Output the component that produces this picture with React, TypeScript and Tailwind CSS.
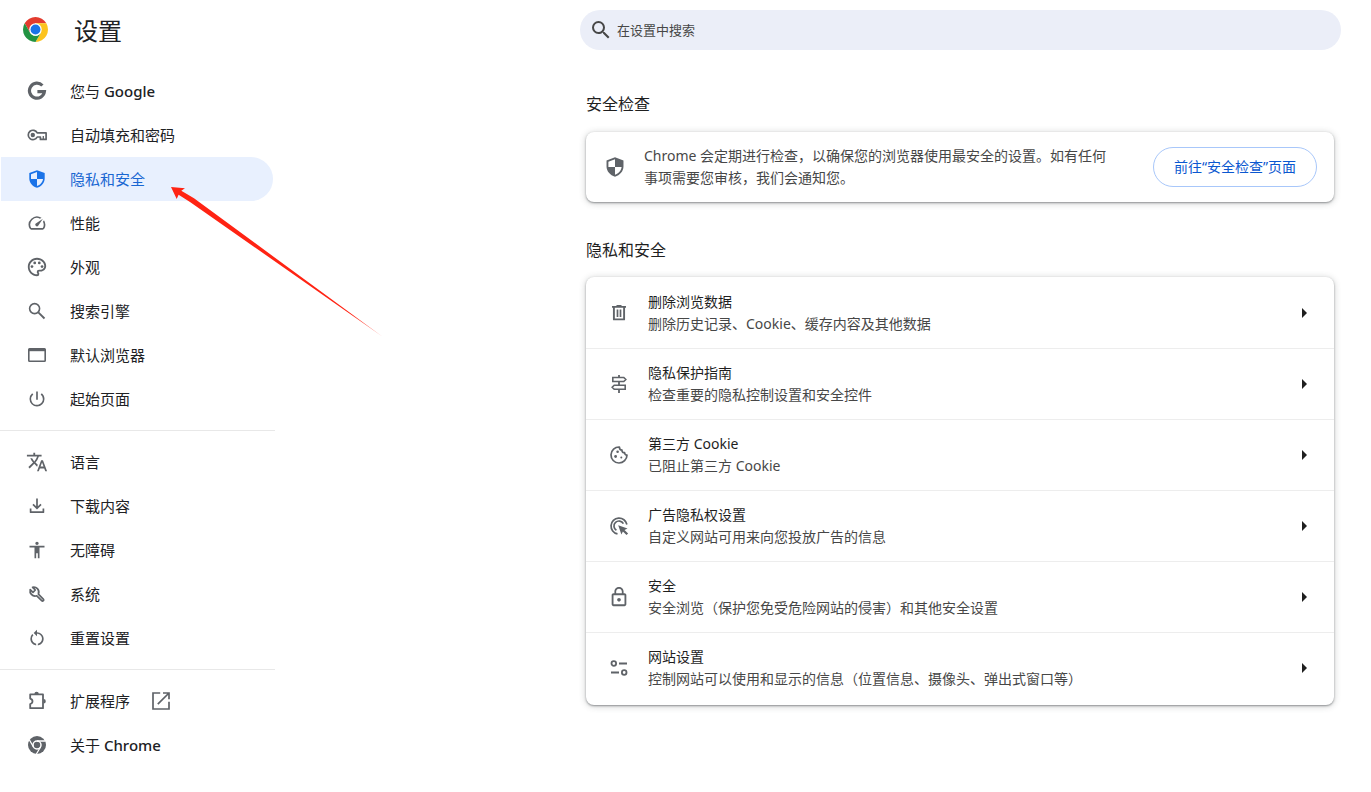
import type { ReactNode } from "react";
import {
  MdAccessibility,
  MdLockOutline,
  MdOutlinePalette,
  MdPowerSettingsNew,
  MdRestartAlt,
  MdSearch,
  MdSpeed,
  MdTranslate,
} from "react-icons/md";
import { clsx } from "clsx";

function Icon({ size = 20, children }: { size?: number; children: ReactNode }) {
  return (
    <svg width={size} height={size} viewBox="0 0 20 20" fill="none" stroke="currentColor" strokeWidth={1.6} aria-hidden>
      {children}
    </svg>
  );
}

function ChromeLogo() {
  return (
    <svg width={25} height={25} viewBox="0 0 48 48" aria-hidden>
      <path d="M24 12h20.78A24 24 0 0 0 3.22 12l10.39 18L24 12Z" fill="#e33b2e" />
      <path d="M34.39 30 24 48A24 24 0 0 0 44.78 12H24l10.39 18Z" fill="#fcc31e" />
      <path d="M13.61 30 3.22 12A24 24 0 0 0 24 48l10.39-18a12 12 0 0 1-20.78 0Z" fill="#229342" />
      <circle cx="24" cy="24" r="12" fill="#fff" />
      <circle cx="24" cy="24" r="9.5" fill="#1a73e8" />
    </svg>
  );
}

function GoogleIcon() {
  return (
    <Icon>
      <path d="M15.4 4.5A7.5 7.5 0 1 0 17.4 10.6H10.4" strokeWidth={3.2} />
    </Icon>
  );
}

function KeyIcon() {
  return (
    <Icon>
      <path d="M10.2 7.9A4.7 4.7 0 1 0 10.2 12H13.4v2.4h5.7V7.9Z" strokeWidth={1.7} strokeLinejoin="round" />
      <path d="M16.3 14.500V11" strokeWidth={1.3} />
      <circle cx="5.8" cy="10" r="2.200" fill="currentColor" stroke="none" />
    </Icon>
  );
}

function ShieldIcon({ size }: { size?: number }) {
  return (
    <Icon size={size}>
      <path
        fill="currentColor"
        stroke="none"
        fillRule="evenodd"
        d="M10 1.2 2.3 4v5.5c0 4.2 3.3 8 7.7 9.3 4.4-1.3 7.7-5.1 7.7-9.3V4L10 1.2ZM10 3v7H4V5.2L10 3Zm0 7h6c-.3 3.2-2.8 6-6 7V10Z"
      />
    </Icon>
  );
}

function NavSearchIcon() {
  return (
    <Icon>
      <circle cx="7.6" cy="7.6" r="5" />
      <path d="m11.3 11.3 6.2 6.2" strokeWidth={1.9} />
    </Icon>
  );
}

function BrowserIcon() {
  return (
    <Icon>
      <rect x="1.8" y="3.8" width="16.4" height="12.4" rx="0.8" />
      <path d="M1.800 4.900h16.400" strokeWidth={2.600} />
    </Icon>
  );
}

function DownloadIcon() {
  return (
    <Icon>
      <path d="M10 2.500v9.500M6 8.400l4 4 4-4" strokeWidth={1.700} />
      <path d="M3.600 12.500v3.700h12.800v-3.700" strokeWidth={1.700} strokeLinejoin="round" />
    </Icon>
  );
}

function WrenchIcon() {
  return (
    <Icon>
      <path
        d="m9.800 11.800 4.900 4.900c.5.5 1.100.5 1.600 0s.5-1.100 0-1.600l-4.900-4.900c.8-1.900.4-4-1-5.500C9 3.300 7.200 2.900 5.600 3.300l2.700 2.700-2.300 2.300-2.800-2.700c-.4 1.700 0 3.500 1.200 4.800 1.400 1.500 3.600 2 5.400 1.400Z"
        strokeWidth={1.700}
        strokeLinejoin="round"
      />
    </Icon>
  );
}

function ExtensionIcon() {
  return (
    <Icon>
      <path
        d="M3.200 3.400h12.800v13.800H3.200V13c1.600-.4 2.300-1.400 2.300-2.700S4.800 8 3.200 7.600Z"
        strokeWidth={1.8}
        strokeLinejoin="round"
      />
      <path d="M7.400 3a2.200 2.200 0 0 1 4.400 0ZM16.600 8a2.200 2.200 0 0 1 0 4.400Z" fill="currentColor" stroke="none" />
    </Icon>
  );
}

function ChromeIcon() {
  return (
    <Icon>
      <circle cx="10" cy="10" r="9" fill="currentColor" stroke="none" />
      <circle cx="10" cy="10" r="4" stroke="#fff" strokeWidth={1.5} />
      <path d="M10 6h8.5M6.500 12 2.300 4.700M13.500 12l-4.200 7.300" stroke="#fff" strokeWidth={1.3} />
    </Icon>
  );
}

function LaunchIcon() {
  return (
    <Icon>
      <path d="M9.200 2H2v16h16v-7.200M12 2h6v6.200M18 2 6.800 13.200" strokeWidth={1.7} />
    </Icon>
  );
}

function TrashIcon() {
  return (
    <Icon>
      <path d="M3 3.900h14M7.500 2.800h5" strokeWidth={1.700} />
      <path d="M4.900 4v12.400h10.200V4" strokeWidth={1.900} strokeLinejoin="round" />
      <path d="M8.500 6.500v7.500M11.500 6.500v7.500" strokeWidth={1.700} />
    </Icon>
  );
}

function SignpostIcon() {
  return (
    <Icon>
      <path d="M10 1v2.500M10 7.500v4M10 15v4" strokeWidth={1.8} />
      <path d="M3.800 3.500h11l2 2-2 2h-11ZM16.200 11.200h-11l-2 2 2 2h11Z" />
    </Icon>
  );
}

function CookieIcon() {
  return (
    <Icon>
      <path
        d="M10.400 2a8 8 0 1 0 7.600 8c-1.400 0-2.300-.8-2.400-2.300-1.700.1-2.800-1-2.600-2.600-1.700 0-2.600-1.300-2.600-3.100Z"
        strokeWidth={1.700}
        strokeLinejoin="round"
      />
      <g fill="currentColor" stroke="none">
        <circle cx="8.600" cy="6.800" r="1.300" />
        <circle cx="6.600" cy="11.500" r="1.400" />
        <circle cx="12.300" cy="12.600" r="1" />
      </g>
    </Icon>
  );
}

function AdsClickIcon() {
  return (
    <Icon>
      <path d="M8.500 17.900A8 8 0 1 1 17.900 8.500" strokeWidth={1.7} />
      <path d="M7.400 14.300a5 5 0 1 1 7-6.600" strokeWidth={1.7} />
      <path d="m9.200 9.200 9.300 3.200-3 1.500 3.600 3.600-1.600 1.600-3.600-3.600-1.500 3Z" fill="currentColor" stroke="none" />
    </Icon>
  );
}

function SiteSettingsIcon() {
  return (
    <Icon>
      <circle cx="4.800" cy="5.500" r="2.300" strokeWidth={1.8} />
      <circle cx="15.200" cy="14.500" r="2.300" strokeWidth={1.8} />
      <path d="M10 5.500h8M2 14.500h8" strokeWidth={1.9} />
    </Icon>
  );
}

type NavItem = {
  label: ReactNode;
  icon: ReactNode;
  active?: boolean;
  external?: boolean;
};

const navGroups: NavItem[][] = [
  [
    { label: <>您与 <span className="font-medium">Google</span></>, icon: <GoogleIcon /> },
    { label: "自动填充和密码", icon: <KeyIcon /> },
    { label: "隐私和安全", icon: <ShieldIcon />, active: true },
    { label: "性能", icon: <MdSpeed size={20} /> },
    { label: "外观", icon: <MdOutlinePalette size={22} /> },
    { label: "搜索引擎", icon: <NavSearchIcon /> },
    { label: "默认浏览器", icon: <BrowserIcon /> },
    { label: "起始页面", icon: <MdPowerSettingsNew size={20} /> },
  ],
  [
    { label: "语言", icon: <MdTranslate size={22} /> },
    { label: "下载内容", icon: <DownloadIcon /> },
    { label: "无障碍", icon: <MdAccessibility size={20} /> },
    { label: "系统", icon: <WrenchIcon /> },
    { label: "重置设置", icon: <MdRestartAlt size={20} /> },
  ],
  [
    { label: "扩展程序", icon: <ExtensionIcon />, external: true },
    { label: <>关于 <span className="font-medium">Chrome</span></>, icon: <ChromeIcon /> },
  ],
];

const privacyRows = [
  { title: "删除浏览数据", detail: "删除历史记录、Cookie、缓存内容及其他数据", icon: <TrashIcon /> },
  { title: "隐私保护指南", detail: "检查重要的隐私控制设置和安全控件", icon: <SignpostIcon /> },
  { title: "第三方 Cookie", detail: "已阻止第三方 Cookie", icon: <CookieIcon /> },
  { title: "广告隐私权设置", detail: "自定义网站可用来向您投放广告的信息", icon: <AdsClickIcon /> },
  { title: "安全", detail: "安全浏览（保护您免受危险网站的侵害）和其他安全设置", icon: <MdLockOutline size={22} /> },
  { title: "网站设置", detail: "控制网站可以使用和显示的信息（位置信息、摄像头、弹出式窗口等）", icon: <SiteSettingsIcon /> },
];

const cardClass =
  "mr-[7px] ml-[6px] rounded-lg bg-white shadow-[0_1px_2px_rgba(60,64,67,0.5),0_1px_6px_1px_rgba(60,64,67,0.2)]";

function Sidebar() {
  return (
    <aside className="w-[275px] shrink-0">
      <header className="flex h-[69px] items-start gap-[26px] pt-[13px] pl-[23px]">
        <div className="pt-1">
          <ChromeLogo />
        </div>
        <h1 className="text-2xl leading-9 text-[#202124]">设置</h1>
      </header>
      <nav aria-label="设置">
        {navGroups.map((group, i) => (
          <ul key={i} className={clsx(i > 0 && "mt-[9px] border-t border-[#e8e8e8] pt-[9px]")}>
            {group.map((item, j) => (
              <li key={j}>
                <a
                  href="#"
                  aria-current={item.active ? "page" : undefined}
                  className={clsx(
                    "mr-[2px] ml-px flex h-11 items-center rounded-r-full pl-[25px] text-[15px]",
                    item.active ? "bg-[#e8f0fe] text-[#1967d2]" : "text-[#202124]",
                  )}
                >
                  <span
                    className={clsx(
                      "mr-[22px] flex w-[22px] justify-center",
                      item.active ? "text-[#1a73e8]" : "text-[#5f6368]",
                    )}
                  >
                    {item.icon}
                  </span>
                  <span className="pt-[2px]">{item.label}</span>
                  {item.external && (
                    <span className="ml-[21px] text-[#5f6368]">
                      <LaunchIcon />
                    </span>
                  )}
                </a>
              </li>
            ))}
          </ul>
        ))}
      </nav>
    </aside>
  );
}

export default function App() {
  return (
    <div
      lang="zh-CN"
      className="relative flex min-h-screen bg-white font-['Noto_Sans','Noto_Sans_CJK_SC',sans-serif] text-sm text-[#1f1f1f]"
    >
      <Sidebar />

      <main className="mr-[30px] ml-auto w-full max-w-[761px] pt-[10px] pb-10">
        <label className="flex h-10 items-center rounded-full bg-[#ebeef8] pr-4 pl-[9px] text-[#474747]">
          <MdSearch size={24} aria-hidden />
          <input
            type="search"
            aria-label="在设置中搜索"
            placeholder="在设置中搜索"
            className="ml-1 min-w-0 flex-1 bg-transparent text-[13px] outline-none placeholder:text-[#474747]"
          />
        </label>

        <section>
          <h2 className="mt-[42px] ml-[6px] text-base leading-6">安全检查</h2>
          <div className={clsx(cardClass, "mt-4 flex min-h-[70px] items-center pr-[17px] pl-[18px]")}>
            <span className="text-[#5f6368]">
              <ShieldIcon size={22} />
            </span>
            <p className="ml-[18px] max-w-[470px] leading-[22px] text-[#474747]">
              Chrome 会定期进行检查，以确保您的浏览器使用最安全的设置。如有任何事项需要您审核，我们会通知您。
            </p>
            <button
              type="button"
              className="ml-auto h-10 w-[164px] shrink-0 rounded-full border border-[#a8c7fa] text-[#0b57d0]"
            >
              前往“安全检查”页面
            </button>
          </div>
        </section>

        <section>
          <h2 className="mt-9 ml-[6px] text-base leading-6">隐私和安全</h2>
          <ul className={clsx(cardClass, "mt-[15px] pt-px pb-[2px]")}>
            {privacyRows.map((row) => (
              <li key={row.title} className="border-b border-[#ededed] last:border-b-0">
                <button type="button" className="flex h-[70px] w-full items-center pr-[27px] pl-[22px] text-left">
                  <span className="flex w-[22px] justify-center text-[#5f6368]">{row.icon}</span>
                  <span className="ml-[18px] flex flex-1 flex-col leading-[22px]">
                    <span>{row.title}</span>
                    <span className="text-[#474747]">{row.detail}</span>
                  </span>
                  <svg width="5" height="10" viewBox="0 0 5 10" fill="currentColor" aria-hidden>
                    <path d="M0 0v10l5-5Z" />
                  </svg>
                </button>
              </li>
            ))}
          </ul>
        </section>
      </main>

      {/* red pointer over the active nav item */}
      <svg
        className="pointer-events-none absolute top-[186px] left-[170px]"
        width="216"
        height="154"
        viewBox="170 186 216 154"
        aria-hidden
      >
        <defs>
          <linearGradient id="pointer" gradientUnits="userSpaceOnUse" x1="171" y1="187" x2="383" y2="337">
            <stop offset="0.85" stopColor="#ff2313" />
            <stop offset="1" stopColor="#ff2313" stopOpacity="0.5" />
          </linearGradient>
        </defs>
        <path d="M171 187 185 188.300 181.300 190.800 194 198.300 383 337 190 202 178.600 194.700 176.700 199Z" fill="url(#pointer)" />
      </svg>
    </div>
  );
}
